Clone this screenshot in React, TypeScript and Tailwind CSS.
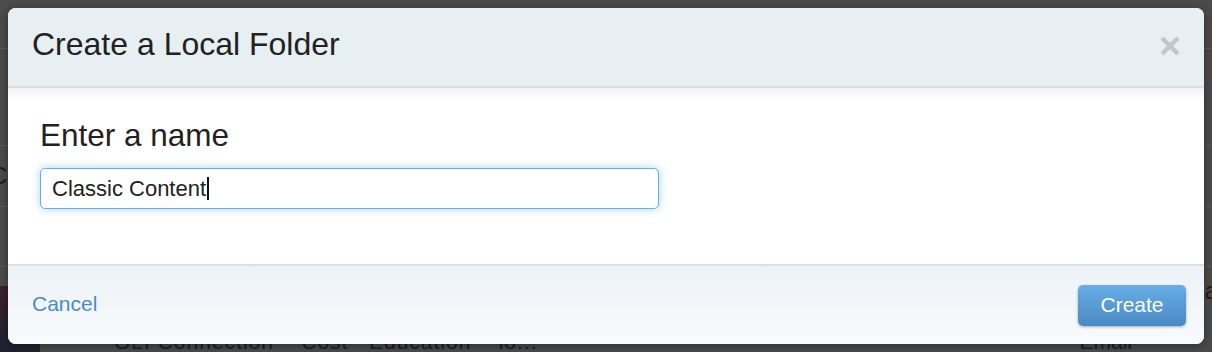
import React from "react";

const font = { fontFamily: '"Liberation Sans", Arial, Helvetica, sans-serif' };

// faint page content sitting behind the dimmed overlay
function Backdrop() {
  return (
    <div className="pointer-events-none absolute inset-0 flex flex-col text-[#1c1c1c]">
      <div className="h-[51px] border-b border-[#5a5a5a]" />
      <div className="h-[102px] border-b border-[#585858]" />
      <div className="flex h-[63px] items-center border-b border-[#585858]">
        <span className="ml-[-10px] text-[24px]">C</span>
      </div>
      <div className="h-[63px] border-b border-[#585858]" />
      <div className="flex flex-1">
        <div className="mt-[19px] w-[40px] bg-gradient-to-b from-[#3a2030] to-[#1e2230]" />
        <div className="flex flex-1 flex-col">
          <div className="flex h-[64px] items-start justify-end pt-[12px]">
            <span className="mr-[-6px] text-[24px] leading-none">a</span>
          </div>
          <div className="flex justify-between pl-[74px] pr-[80px] text-[21px] leading-none">
            <span className="tracking-[1px]">GLI Connection&nbsp;&nbsp;&nbsp;&nbsp;Cost&nbsp;&nbsp;&nbsp;Education&nbsp;&nbsp;&nbsp;&nbsp;lo...</span>
            <span>Email</span>
          </div>
        </div>
      </div>
    </div>
  );
}

export default function App() {
  return (
    <div className="relative h-[352px] w-full overflow-hidden bg-[#4b4b4b] p-2" style={font}>
      <Backdrop />
      <div className="relative z-10 flex h-full flex-col overflow-hidden rounded-[8px] bg-white shadow-[0_2px_10px_rgba(0,0,0,0.4)]">
        <div className="flex h-[80px] shrink-0 items-start justify-between border-b-2 border-[#d9dee1] bg-[#e8eff3] pl-6 pr-[23px] pt-[18px]">
          <h1 className="text-[32px] leading-[1.15] text-[#222]">Create a Local Folder</h1>
          <svg className="mt-[9px]" width="22" height="22" viewBox="0 0 22 22" aria-hidden="true">
            <path d="M3 3 L19 19 M19 3 L3 19" stroke="#c3c7ca" strokeWidth="4.5" strokeLinecap="butt" />
          </svg>
        </div>

        <div className="flex h-[176px] shrink-0 flex-col bg-gradient-to-b from-[#f1f2f3] from-0% via-white via-[7%] to-white px-8 pt-[29px]">
          <label className="text-[31.5px] leading-[1.15] text-[#222]">Enter a name</label>
          <div className="mt-[15px] flex h-[41px] w-[619px] items-center rounded-[5px] border border-[#66afe9] bg-white pl-[11px] shadow-[0_0_9px_rgba(102,175,233,0.55)]">
            <span className="text-[22px] leading-none text-[#222]">Classic Content</span>
            <span className="ml-[1px] h-[23px] w-[2px] bg-[#111]" />
          </div>
        </div>

        <div className="flex flex-1 items-center justify-between border-t-2 border-[#dcdee0] bg-gradient-to-b from-[#ecf2f7] to-[#f9fbfd] pl-6 pr-[18px]">
          <a className="mt-[-3px] text-[21px] text-[#4a8cc8]">Cancel</a>
          <button className="flex h-[41px] w-[108px] items-center justify-center rounded-[5px] bg-gradient-to-b from-[#68aee6] to-[#4a89c4] text-[21px] text-white shadow-[0_1px_3px_rgba(0,0,0,0.3)]">
            Create
          </button>
        </div>
      </div>
    </div>
  );
}
